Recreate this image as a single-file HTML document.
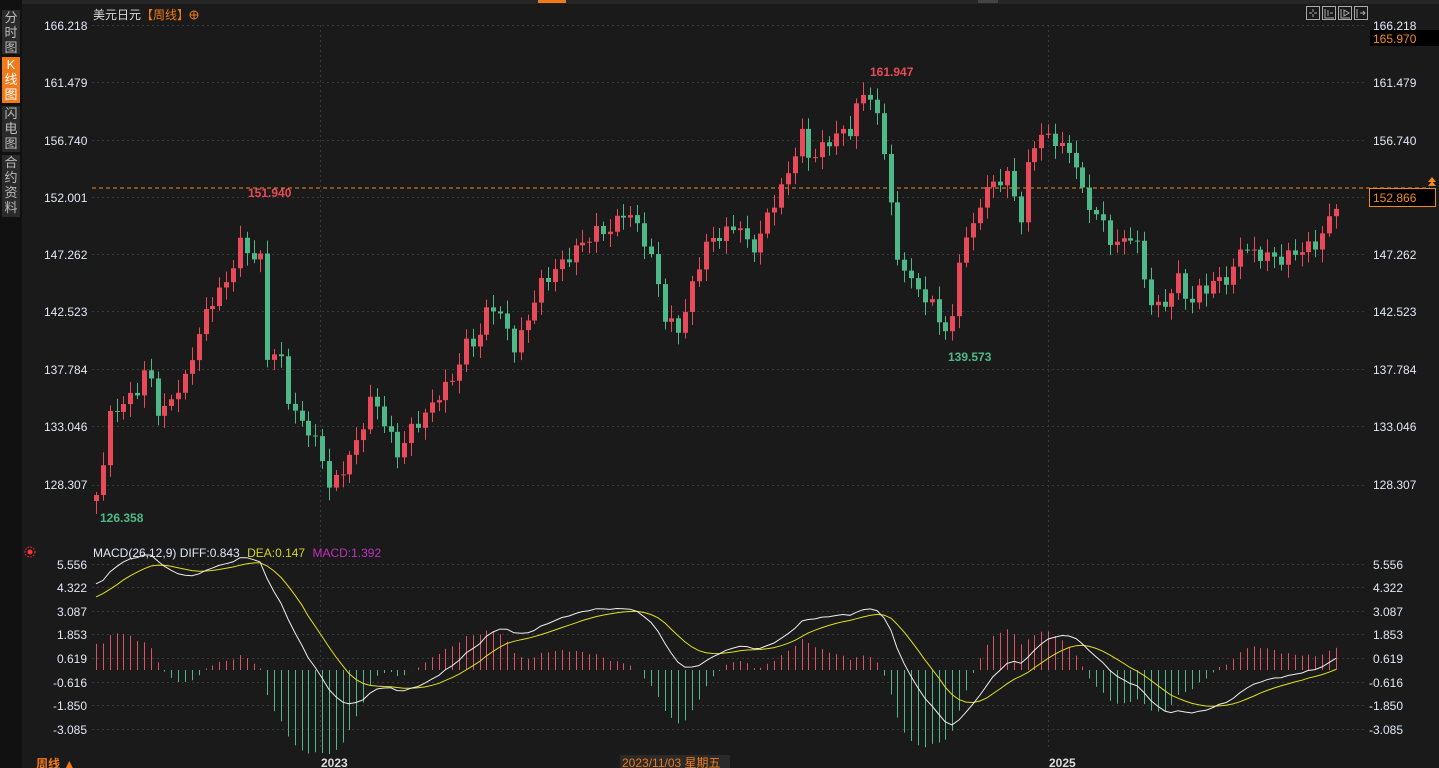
<!DOCTYPE html>
<html><head><meta charset="utf-8"><style>
body{margin:0;width:1439px;height:768px;overflow:hidden;background:#1a1a1a;font-family:"Liberation Sans","Noto Sans CJK SC",sans-serif;}
svg{position:absolute;left:0;top:0}
.side{position:absolute;left:2px;width:18px;background:#2a2a2a;color:#bbb;font-size:13px;line-height:15px;text-align:center;}
</style></head><body>
<svg id="s" width="1439" height="768" xmlns="http://www.w3.org/2000/svg" font-family="Liberation Sans, Noto Sans CJK SC, sans-serif">
<rect width="1439" height="768" fill="#1a1a1a"/>
<rect x="0" y="0" width="22" height="768" fill="#111"/>
<rect x="22" y="0" width="1417" height="4" fill="#262626"/>
<rect x="538" y="0" width="28" height="3" fill="#f07a1a"/>
<rect x="978" y="0" width="20" height="3" fill="#444"/>
<g id="grid" stroke="#3a3a3a" stroke-dasharray="2,3"></g>
<line x1="92" y1="188" x2="1430" y2="188" stroke="#f08a20" stroke-dasharray="4,3"/>
<g id="c"></g>
<g id="m"></g>
<g font-size="12" fill="#dfe8f5">
<text x="44" y="30">166.218</text><text x="44" y="87">161.479</text><text x="44" y="145">156.740</text><text x="44" y="202">152.001</text><text x="44" y="259">147.262</text><text x="44" y="316">142.523</text><text x="44" y="374">137.784</text><text x="44" y="431">133.046</text><text x="44" y="489">128.307</text>
<text x="1373" y="30">166.218</text><text x="1373" y="87">161.479</text><text x="1373" y="145">156.740</text><text x="1373" y="259">147.262</text><text x="1373" y="316">142.523</text><text x="1373" y="374">137.784</text><text x="1373" y="431">133.046</text><text x="1373" y="489">128.307</text>
<text x="57" y="569">5.556</text><text x="57" y="592">4.322</text><text x="57" y="616">3.087</text><text x="57" y="639">1.853</text><text x="57" y="663">0.619</text><text x="53" y="687">-0.616</text><text x="53" y="710">-1.850</text><text x="53" y="734">-3.085</text>
<text x="1373" y="569">5.556</text><text x="1373" y="592">4.322</text><text x="1373" y="616">3.087</text><text x="1373" y="639">1.853</text><text x="1373" y="663">0.619</text><text x="1369" y="687">-0.616</text><text x="1369" y="710">-1.850</text><text x="1369" y="734">-3.085</text>
</g>
<rect x="1370" y="30" width="69" height="16" fill="#000"/>
<text x="1373" y="43" font-size="12" fill="#f08a20">165.970</text>
<rect x="1369.5" y="188.5" width="66" height="18" fill="#000" stroke="#f08a20"/>
<text x="1373" y="202" font-size="12" fill="#f08a20">152.866</text>
<path d="M1428 186 l4 -5 l4 5z M1428 182 l4 -5 l4 5z" fill="#f08a20"/>
<text x="93" y="19" font-size="12" fill="#ddd">美元日元<tspan fill="#f07a1a">【周线】</tspan></text>
<circle cx="194" cy="15" r="4" fill="none" stroke="#f07a1a"/><path d="M190 15h8M194 11v8" stroke="#f07a1a"/>
<g fill="none" stroke="#aaa"><rect x="1306.5" y="6.5" width="13" height="13"/><rect x="1322.5" y="6.5" width="13" height="13"/><rect x="1338.5" y="6.5" width="13" height="13"/><rect x="1354.5" y="6.5" width="13" height="13"/>
<path d="M1313 9v3M1313 14v3M1309 13h3M1314 13h3M1325 9v9h9M1328 10v6M1330 13h3M1341 9v9h9M1344 10l5 3l-5 3zM1357 9v9M1360 13h5M1363 11l2 2l-2 2"/></g>
<text x="870" y="76" font-size="12" font-weight="bold" fill="#e84a5a">161.947</text>
<text x="248" y="197" font-size="12" font-weight="bold" fill="#e84a5a">151.940</text>
<text x="948" y="361" font-size="12" font-weight="bold" fill="#4fb888">139.573</text>
<text x="100" y="522" font-size="12" font-weight="bold" fill="#4fb888">126.358</text>
<circle cx="30" cy="552" r="2.5" fill="#f33"/><circle cx="30" cy="552" r="5" fill="none" stroke="#f33" stroke-dasharray="1.5,1.5"/>
<text x="93" y="557" font-size="12" fill="#dfe8f5">MACD(26,12,9) DIFF:0.843 <tspan fill="#d4d420" dx="4">DEA:0.147</tspan> <tspan fill="#c030c0" dx="4">MACD:1.392</tspan></text>
<rect x="22" y="754" width="1417" height="14" fill="#1a1a1a"/>
<text x="36" y="768" font-size="12" font-weight="bold" fill="#f07a1a">周线 ▲</text>
<text x="321" y="767" font-size="12" font-weight="bold" fill="#ddd">2023</text>
<text x="1049" y="767" font-size="12" font-weight="bold" fill="#ddd">2025</text>
<rect x="620" y="755" width="110" height="13" fill="#2a2a2a"/>
<text x="622" y="767" font-size="12" fill="#f07a1a">2023/11/03 星期五</text>
</svg>
<div class="side" style="top:10px;height:44px">分<br>时<br>图</div>
<div class="side" style="top:57px;height:46px;background:#f07a1a;color:#fff">K<br>线<br>图</div>
<div class="side" style="top:106px;height:46px">闪<br>电<br>图</div>
<div class="side" style="top:155px;height:62px">合<br>约<br>资<br>料</div>
<script>
(function(){
var NS="http://www.w3.org/2000/svg";
function el(p,t,a){var e=document.createElementNS(NS,t);for(var k in a)e.setAttribute(k,a[k]);p.appendChild(e);return e;}
var g=document.getElementById('grid');
[25,82,140,197,254,311,369,426,485,564,587,611,634,658,682,705,729].forEach(function(y){el(g,'line',{x1:92,y1:y+.5,x2:1365,y2:y+.5});});
[320,1048].forEach(function(x){el(g,'line',{x1:x+.5,y1:25,x2:x+.5,y2:750});});
var W=[[96,495],[103,460],[110,415],[120,405],[135,395],[147,365],[160,420],[170,400],[185,380],[195,345],[205,315],[215,295],[230,280],[237,240],[250,255],[262,260],[265,355],[280,355],[290,410],[305,425],[320,450],[330,490],[345,465],[358,440],[372,395],[385,425],[398,455],[410,430],[425,415],[438,395],[452,380],[465,345],[478,340],[490,300],[505,325],[515,350],[525,325],[540,285],[555,270],[565,260],[580,245],[595,232],[610,230],[625,210],[640,230],[655,270],[665,320],[680,330],[695,275],[705,245],[720,235],[740,225],[750,255],[760,235],[770,210],[780,190],[790,170],[800,130],[810,160],[820,150],[835,135],[850,130],[860,95],[870,95],[880,130],[890,185],[893,265],[905,265],[915,290],[930,300],[942,330],[955,320],[960,245],[975,225],[980,200],[990,185],[1000,180],[1010,175],[1020,225],[1030,150],[1040,135],[1055,140],[1065,150],[1075,160],[1085,205],[1095,210],[1110,240],[1120,245],[1135,230],[1140,265],[1150,300],[1160,310],[1170,295],[1180,275],[1190,310],[1200,285],[1210,290],[1220,275],[1230,285],[1240,245],[1255,255],[1265,255],[1280,260],[1300,250],[1315,245],[1325,230],[1335,205],[1341,190]];
function yAt(x){for(var i=1;i<W.length;i++){if(x<=W[i][0]){var a=W[i-1],b=W[i];return a[1]+(b[1]-a[1])*(x-a[0])/(b[0]-a[0]);}}return W[W.length-1][1];}
var c=document.getElementById('c'),closes=[],xs=[],prev=yAt(96)+6;
for(var x=96,i=0;x<=1341;x+=6.85,i++){
 var cy=yAt(x)+Math.sin(i*2.3)*6;var o=prev,cl=cy;
 var hi=Math.min(o,cl)-3-Math.abs(Math.sin(i*1.7))*10,lo=Math.max(o,cl)+3+Math.abs(Math.cos(i*1.3))*10;
 var up=cl<o,col=up?'#e84a5a':'#4fb888';var xx=Math.round(x);
 el(c,'line',{x1:xx+.5,y1:hi,x2:xx+.5,y2:lo,stroke:col});
 el(c,'rect',{x:xx-2,y:Math.min(o,cl),width:5,height:Math.max(1,Math.abs(cl-o)),fill:col});
 prev=cl;closes.push(166.218-(cl-25)/12.134);xs.push(xx);}
var m=document.getElementById('m'),e12=closes[0]-4.6,e26=closes[0]-9,dea=3.6,pd='',pe='',Z=670,S=19.4;
for(var k=0;k<closes.length;k++){var p=closes[k];e12=e12+(p-e12)*2/13;e26=e26+(p-e26)*2/27;var d=e12-e26;dea=dea+(d-dea)*2/10;
 var h=(d-dea)*2;var yh=Z-h*S;
 el(m,'line',{x1:xs[k]+.5,y1:Z,x2:xs[k]+.5,y2:yh,stroke:h>0?'#e05060':'#50b888'});
 pd+=(k?'L':'M')+xs[k]+' '+(Z-d*S).toFixed(1);pe+=(k?'L':'M')+xs[k]+' '+(Z-dea*S).toFixed(1);}
el(m,'path',{d:pe,fill:'none',stroke:'#e0e020'});el(m,'path',{d:pd,fill:'none',stroke:'#eee'});
})();
</script>
</body></html>
